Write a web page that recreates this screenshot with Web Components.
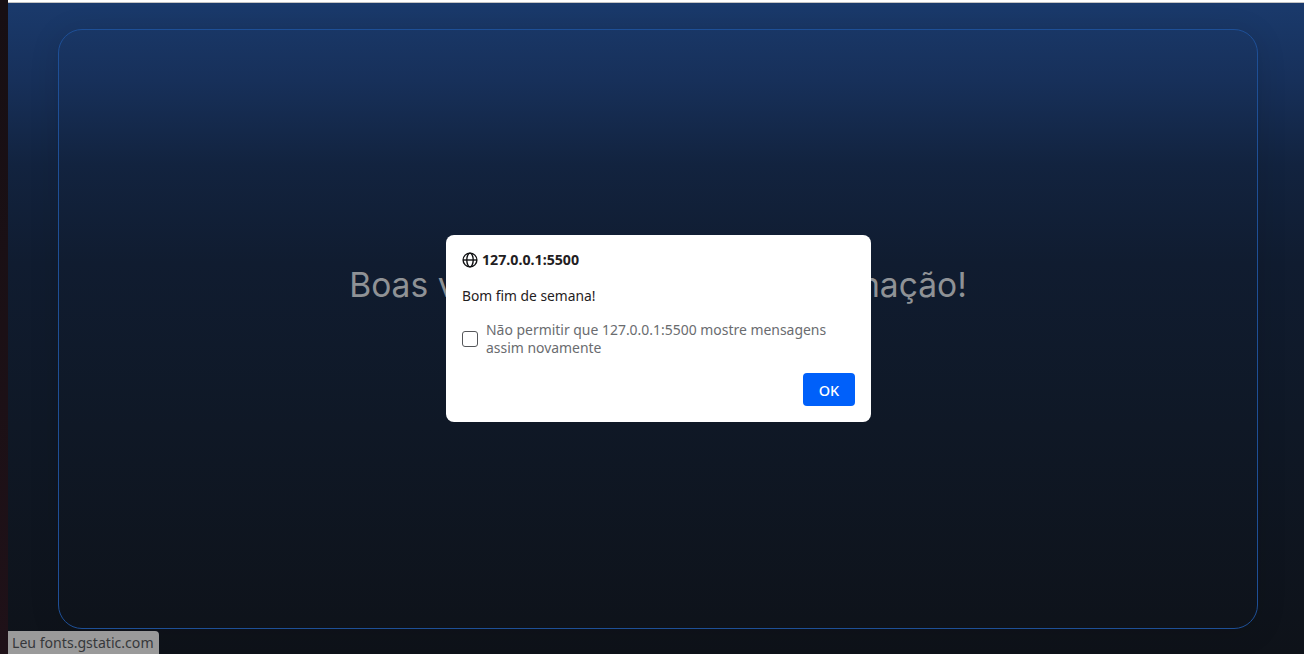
<!DOCTYPE html>
<html lang="pt">
<head>
<meta charset="utf-8">
<title>Boas vindas</title>
<style>
  html, body { margin: 0; height: 100%; background: #1a0f14; overflow: hidden; }
  body { display: flex; }
</style>
</head>
<body>
<side-strip></side-strip>
<main-page>
  <welcome-card>Boas vindas à página de programação!</welcome-card>
</main-page>
<alert-dialog origin="127.0.0.1:5500" message="Bom fim de semana!"></alert-dialog>
<status-bubble>Leu fonts.gstatic.com</status-bubble>

<script>
class SideStrip extends HTMLElement {
  constructor() {
    super();
    this.attachShadow({ mode: 'open' });
    this.shadowRoot.innerHTML = `
      <style>
        :host { display: block; width: 8px; flex: none; background: linear-gradient(#170f13, #1f1118); }
      </style>
    `;
  }
}

class MainPage extends HTMLElement {
  constructor() {
    super();
    this.attachShadow({ mode: 'open' });
    this.shadowRoot.innerHTML = `
      <style>
        :host {
          display: flex;
          flex-direction: column;
          flex: 1;
          min-width: 0;
          border-top: 2px solid #fff;
          background: linear-gradient(#1a3a6c 0%, #17305a 12%, #12233f 25%, #101c30 40%, #0f1826 65%, #0e1219 100%);
        }
        .wrap { flex: 1; display: flex; justify-content: center; padding: 26px 0 0 4px; border-top: 1px solid #c4c4c4; }
      </style>
      <div class="wrap"><slot></slot></div>
    `;
  }
}

class WelcomeCard extends HTMLElement {
  constructor() {
    super();
    this.attachShadow({ mode: 'open' });
    this.shadowRoot.innerHTML = `
      <style>
        :host {
          display: flex;
          box-sizing: border-box;
          width: 1200px;
          height: 600px;
          flex: none;
          align-items: flex-start;
          justify-content: center;
          padding-top: 235px;
          border: 1px solid #1e4f96;
          border-radius: 24px;
          box-shadow: 0 4px 30px rgba(0, 0, 0, .12);
          color: #8f9296;
          font: 400 33.6px/40px Inter, "Liberation Sans", sans-serif;
        }
      </style>
      <slot></slot>
    `;
  }
}

class AlertDialog extends HTMLElement {
  constructor() {
    super();
    this.attachShadow({ mode: 'open' });
    const origin = this.getAttribute('origin');
    this.shadowRoot.innerHTML = `
      <style>
        :host {
          position: absolute;
          left: 446px;
          top: 235px;
          box-sizing: border-box;
          width: 425px;
          height: 187px;
          padding: 16px;
          display: flex;
          flex-direction: column;
          background: #fff;
          border-radius: 8px;
          color: #1f2022;
          font: 13.8px/18px "Noto Sans", sans-serif;
        }
        .head { display: flex; align-items: center; gap: 4px; font-weight: 700; font-size: 14.2px; margin-bottom: 18px; }
        .head svg { flex: none; }
        .check { display: flex; align-items: center; gap: 8px; margin-top: 16px; color: #6a6c6f; font-size: 13.95px; }
        .box { flex: none; box-sizing: border-box; width: 16px; height: 16px; border: 1px solid #55575a; border-radius: 3px; }
        .actions { margin-top: auto; display: flex; justify-content: flex-end; }
        button {
          width: 52px; height: 33px; border: 0; border-radius: 4px; padding: 0;
          background: #0060fa; color: #fff; font: 500 14.5px "Noto Sans", sans-serif;
        }
      </style>
      <div class="head">
        <svg width="16" height="16" viewBox="0 0 16 16" fill="none" stroke="#111214" stroke-width="1.4">
          <circle cx="8" cy="8" r="6.9"/>
          <ellipse cx="8" cy="8" rx="3.2" ry="6.9"/>
          <path d="M1 8h14"/>
        </svg>
        <span>${origin}</span>
      </div>
      <div>${this.getAttribute('message')}</div>
      <div class="check">
        <span class="box"></span>
        <span>Não permitir que ${origin} mostre mensagens assim novamente</span>
      </div>
      <div class="actions"><button>OK</button></div>
    `;
  }
}

class StatusBubble extends HTMLElement {
  constructor() {
    super();
    this.attachShadow({ mode: 'open' });
    this.shadowRoot.innerHTML = `
      <style>
        :host {
          position: absolute;
          left: 8px;
          bottom: 0;
          box-sizing: border-box;
          height: 23px;
          padding: 0 5px 0 4px;
          display: flex;
          align-items: center;
          background: #9a9a9a;
          border-top-right-radius: 4px;
          color: #36383b;
          font: 14.1px "Noto Sans", sans-serif;
        }
      </style>
      <slot></slot>
    `;
  }
}

customElements.define('side-strip', SideStrip);
customElements.define('main-page', MainPage);
customElements.define('welcome-card', WelcomeCard);
customElements.define('alert-dialog', AlertDialog);
customElements.define('status-bubble', StatusBubble);
</script>
</body>
</html>
